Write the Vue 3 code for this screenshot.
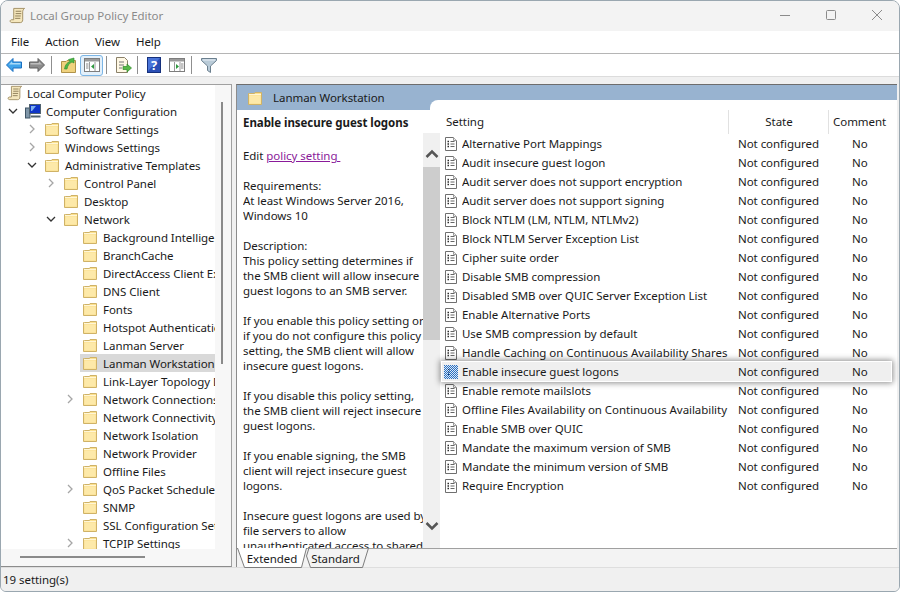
<template>
  <div class="window">
    <svg class="defs" width="0" height="0">
      <symbol id="folder" viewBox="0 0 16 16">
        <path d="M1.500 3.500 V14.500 H14.500 V2.500 H8 L7.500 3.500 H2.500 Z" fill="#fbe08f" stroke="#cfb267" />
        <path d="M2.500 5.500 H13.500 V13.500 H2.500 Z" fill="#fde9a9" />
        <path d="M2 4.500 H14" stroke="#fff6d6" />
      </symbol>
      <symbol id="doc" viewBox="0 0 16 16">
        <path d="M2.500 1.500 H10.500 L13.500 4.500 V14.500 H2.500 Z" fill="#fff" stroke="#6f6f6f" />
        <path d="M10.500 1.500 V4.500 H13.500" fill="#eee" stroke="#9a9a9a" />
        <path d="M4.500 5.500 H6 M4.500 8 H6 M4.500 10.500 H6" stroke="#2a2a2a" stroke-width="1.300" />
        <path d="M7.500 5.500 H11.500 M7.500 8 H11.500 M7.500 10.500 H11.500" stroke="#666" />
      </symbol>
      <symbol id="scroll" viewBox="0 0 18 18">
        <path d="M5 1.500 H16.500 C15 2.500 14.500 4 14.500 5 V13.500 C14.500 15.500 13.500 16.500 12 16.500 H3 C1 16.500 0.500 14 2.500 13.500 H5 Z" fill="#f5e7bd" stroke="#a08e63" />
        <path d="M7 4.500 H13 M7 7 H13 M6.500 9.500 H12.500 M6.500 12 H12" stroke="#8a7a55" />
      </symbol>
      <symbol id="computer" viewBox="0 0 16 16">
        <rect x="0.500" y="5" width="4.500" height="10" fill="#7f96a8" stroke="#3f5566" />
        <rect x="4.500" y="1.500" width="11" height="9" fill="#0f35c8" stroke="#50626f" />
        <path d="M6 3 H11 L7 8 H6 Z" fill="#7fb2ef" />
        <path d="M6 13.500 H15.500" stroke="#50626f" stroke-width="2" />
      </symbol>
      <pattern id="dither" width="2" height="2" patternUnits="userSpaceOnUse">
        <rect width="2" height="2" fill="#dbe8f6" />
        <rect width="1" height="1" fill="#2a6fc0" />
        <rect x="1" y="1" width="1" height="1" fill="#2a6fc0" />
      </pattern>
    </svg>

    <div class="titlebar">
      <svg class="app-icon" width="17" height="17"><use href="#scroll" /></svg>
      <span class="title">Local Group Policy Editor</span>
      <div class="controls">
        <svg width="10" height="10" viewBox="0 0 10 10"><path d="M0 5.500 H10" stroke="#8b8b8b" /></svg>
        <svg width="10" height="10" viewBox="0 0 10 10"><rect x="0.500" y="0.500" width="9" height="9" rx="1" fill="none" stroke="#8b8b8b" /></svg>
        <svg width="10" height="10" viewBox="0 0 10 10"><path d="M0 0 L10 10 M10 0 L0 10" stroke="#8b8b8b" /></svg>
      </div>
    </div>

    <div class="menubar">
      <span v-for="m in menus" :key="m">{{ m }}</span>
    </div>

    <div class="toolbar">
      <svg class="tool m7" width="16" height="14" viewBox="0 0 16 14"><path d="M0.500 7 L7 0.500 V4 H15.500 V10 H7 V13.500 Z" fill="#3fa4ea" stroke="#1a6fc0" /><path d="M2.500 7 L6 3.500 V5 H14.500 V6.500 H3 Z" fill="#a9daf8" /></svg>
      <svg class="tool m6" width="16" height="14" viewBox="0 0 16 14"><path d="M15.500 7 L9 0.500 V4 H0.500 V10 H9 V13.500 Z" fill="#8c8c8c" stroke="#5f5f5f" /><path d="M13.500 7 L10 3.500 V5 H1.500 V6.500 H13 Z" fill="#bdbdbd" /></svg>
      <i class="sep"></i>
      <svg class="tool" width="15" height="16" viewBox="0 0 15 16"><path d="M0.500 4.500 H5 L6 3.500 H14.500 V15.500 H0.500 Z" fill="#f0d27e" stroke="#b0934a" /><path d="M3.500 12 C4 8 6 5.500 9 4.500 L7.500 2.500 L13 1 L13 6 L11 5 C8.500 6 6.500 8.500 6 12 Z" fill="#4fb848" stroke="#2a8a2a" stroke-width="0.600" /></svg>
      <span class="tool-active">
        <svg width="16" height="14" viewBox="0 0 16 14"><rect x="0.500" y="0.500" width="15" height="13" fill="#fff" stroke="#7d7d7d" /><path d="M1 1 H15 V3.500 H1 Z" fill="#9a9a9a" /><path d="M5.500 4 V13 M11 4 V13" stroke="#9a9a9a" /><path d="M2 6 H4.500 M2 8 H4.500 M2 10 H4.500" stroke="#888" /><path d="M10 6 V11 L7 8.500 Z" fill="#2f9a3f" /></svg>
      </span>
      <i class="sep"></i>
      <svg class="tool pull m5" width="17" height="16" viewBox="0 0 17 16"><path d="M1.500 0.500 H9.500 L12.500 3.500 V15.500 H1.500 Z" fill="#fff8e4" stroke="#8a8069" /><path d="M4 5 H9 M4 8 H9 M4 11 H7" stroke="#777" /><path d="M8 9.500 H12 V7 L16.500 11 L12 15 V12.500 H8 Z" fill="#58b947" stroke="#2f8a2a" stroke-width="0.700" /></svg>
      <i class="sep"></i>
      <svg class="tool m8" width="14" height="16" viewBox="0 0 14 16"><rect x="0.500" y="0.500" width="13" height="15" fill="#2b4fb5" stroke="#15307c" /><path d="M1 1 H13 L1 14 Z" fill="#4a74d8" /><text x="7" y="13" text-anchor="middle" class="help-glyph">?</text></svg>
      <svg class="tool m6" width="16" height="14" viewBox="0 0 16 14"><rect x="0.500" y="0.500" width="15" height="13" fill="#fff" stroke="#7d7d7d" /><path d="M1 1 H15 V3.500 H1 Z" fill="#9a9a9a" /><path d="M5.500 4 V13 M11 4 V13" stroke="#9a9a9a" /><path d="M12 6 H14.500 M12 8 H14.500 M12 10 H14.500" stroke="#888" /><path d="M7 6 V11 L10 8.500 Z" fill="#2f9a3f" /></svg>
      <i class="sep"></i>
      <svg class="tool" width="16" height="15" viewBox="0 0 16 15"><path d="M0.500 0.500 H15.500 V2.500 L9.500 8 V14.500 L6.500 12.500 V8 L0.500 2.500 Z" fill="#b9cbd8" stroke="#6b7f8e" /><path d="M2 1.500 H14 V2.500 H2 Z" fill="#e9f0f5" /></svg>
    </div>

    <div class="panes">
      <div class="tree-pane">
        <div class="tree">
          <div class="tree-inner">
            <div
              v-for="node in tree"
              :key="node.label"
              class="tree-row"
              :class="{ selected: node.selected, root: node.level === 0 }"
              :style="{ paddingLeft: Math.max(node.level * 19 - 13, 5) + 'px' }"
            >
              <svg class="chev" width="10" height="10" viewBox="0 0 10 10">
                <path v-if="node.arrow === 'open'" d="M1 3 L5 7 L9 3" fill="none" stroke="#333" stroke-width="1.300" />
                <path v-if="node.arrow === 'closed'" d="M3 1 L7 5 L3 9" fill="none" stroke="#a6a6a6" stroke-width="1.300" />
              </svg>
              <svg class="node-icon" width="16" height="16"><use :href="'#' + (node.icon || 'folder')" /></svg>
              <span class="node-label">{{ node.label }}</span>
            </div>
          </div>
        </div>
        <div class="tree-vscroll"><i></i></div>
        <div class="tree-hscroll"><i></i></div>
      </div>

      <div class="detail-pane">
        <div class="detail-head">
          <svg width="16" height="16"><use href="#folder" /></svg>
          <span>Lanman Workstation</span>
        </div>
        <div class="detail-body">
          <div class="desc">
            <div class="desc-text">
              <div class="desc-title">Enable insecure guest logons</div>
              <div class="desc-edit">Edit <a href="#" @click.prevent>policy setting&nbsp;</a></div>
              <div v-for="(line, i) in descLines" :key="i" class="desc-line">{{ line }}</div>
            </div>
            <div class="desc-scroll">
              <svg width="14" height="10" viewBox="0 0 14 10"><path d="M1.500 8 L7 2.500 L12.500 8" fill="none" stroke="#555" stroke-width="2.500" /></svg>
              <i></i>
              <svg width="14" height="10" viewBox="0 0 14 10"><path d="M1.500 2 L7 7.500 L12.500 2" fill="none" stroke="#555" stroke-width="2.500" /></svg>
            </div>
          </div>
          <div class="list">
            <div class="list-head">
              <span class="col-setting">Setting</span>
              <span class="col-state">State</span>
              <span class="col-comment">Comment</span>
            </div>
            <div
              v-for="s in settings"
              :key="s"
              class="list-row"
              :class="{ active: s === activeSetting }"
            >
              <svg v-if="s === activeSetting" class="row-icon" width="16" height="16" viewBox="0 0 16 16"><rect x="1" y="1" width="14" height="14" fill="url(#dither)" /><path d="M5 5.500 H6.500 M5 8 H6.500 M5 10.500 H6.500" stroke="#123a70" /></svg>
              <svg v-else class="row-icon" width="16" height="16"><use href="#doc" /></svg>
              <span class="cell-name">{{ s }}</span>
              <span class="cell-state">Not configured</span>
              <span class="cell-comment">No</span>
            </div>
          </div>
        </div>
        <div class="tabs">
          <div class="tab tab-ext">
            <svg width="70" height="20" viewBox="0 0 70 20"><path d="M0.500 0 L7.500 19.500 H64.500 L69.500 0" fill="#fff" stroke="#7c7c7c" /></svg>
            <span>Extended</span>
          </div>
          <div class="tab tab-std">
            <svg width="64" height="20" viewBox="0 0 64 20"><path d="M0.500 8 L4.500 19.500 H56.500 L62.500 0 M0.500 8 L3 0" fill="none" stroke="#7c7c7c" /></svg>
            <span>Standard</span>
          </div>
        </div>
      </div>
    </div>

    <div class="statusbar">19 setting(s)</div>
  </div>
</template>

<script setup>
const menus = ["File", "Action", "View", "Help"];

const tree = [
  { label: "Local Computer Policy", level: 0, icon: "scroll" },
  { label: "Computer Configuration", level: 1, arrow: "open", icon: "computer" },
  { label: "Software Settings", level: 2, arrow: "closed" },
  { label: "Windows Settings", level: 2, arrow: "closed" },
  { label: "Administrative Templates", level: 2, arrow: "open" },
  { label: "Control Panel", level: 3, arrow: "closed" },
  { label: "Desktop", level: 3 },
  { label: "Network", level: 3, arrow: "open" },
  { label: "Background Intelligent Transfer", level: 4 },
  { label: "BranchCache", level: 4 },
  { label: "DirectAccess Client Experience", level: 4 },
  { label: "DNS Client", level: 4 },
  { label: "Fonts", level: 4 },
  { label: "Hotspot Authentication", level: 4 },
  { label: "Lanman Server", level: 4 },
  { label: "Lanman Workstation", level: 4, selected: true },
  { label: "Link-Layer Topology Discovery", level: 4 },
  { label: "Network Connections", level: 4, arrow: "closed" },
  { label: "Network Connectivity Status", level: 4 },
  { label: "Network Isolation", level: 4 },
  { label: "Network Provider", level: 4 },
  { label: "Offline Files", level: 4 },
  { label: "QoS Packet Scheduler", level: 4, arrow: "closed" },
  { label: "SNMP", level: 4 },
  { label: "SSL Configuration Settings", level: 4 },
  { label: "TCPIP Settings", level: 4, arrow: "closed" },
];

const descLines = [
  "Requirements:",
  "At least Windows Server 2016,",
  "Windows 10",
  "",
  "Description:",
  "This policy setting determines if",
  "the SMB client will allow insecure",
  "guest logons to an SMB server.",
  "",
  "If you enable this policy setting or",
  "if you do not configure this policy",
  "setting, the SMB client will allow",
  "insecure guest logons.",
  "",
  "If you disable this policy setting,",
  "the SMB client will reject insecure",
  "guest logons.",
  "",
  "If you enable signing, the SMB",
  "client will reject insecure guest",
  "logons.",
  "",
  "Insecure guest logons are used by",
  "file servers to allow",
  "unauthenticated access to shared",
];

const activeSetting = "Enable insecure guest logons";

const settings = [
  "Alternative Port Mappings",
  "Audit insecure guest logon",
  "Audit server does not support encryption",
  "Audit server does not support signing",
  "Block NTLM (LM, NTLM, NTLMv2)",
  "Block NTLM Server Exception List",
  "Cipher suite order",
  "Disable SMB compression",
  "Disabled SMB over QUIC Server Exception List",
  "Enable Alternative Ports",
  "Use SMB compression by default",
  "Handle Caching on Continuous Availability Shares",
  "Enable insecure guest logons",
  "Enable remote mailslots",
  "Offline Files Availability on Continuous Availability",
  "Enable SMB over QUIC",
  "Mandate the maximum version of SMB",
  "Mandate the minimum version of SMB",
  "Require Encryption",
];
</script>

<style>
html,
body {
  margin: 0;
  background: #fff;
}
</style>

<style scoped>
.window {
  width: 900px;
  height: 592px;
  box-sizing: border-box;
  border: 1px solid #9aa7b0;
  border-radius: 8px 8px 6px 6px;
  overflow: hidden;
  display: flex;
  flex-direction: column;
  background: #f0f0f0;
  font-family: "Noto Sans", sans-serif;
  font-size: 11.5px;
  letter-spacing: -0.05px;
  color: #1a1a1a;
}

.defs {
  position: absolute;
}

.titlebar {
  height: 30px;
  flex: none;
  box-sizing: border-box;
  display: flex;
  align-items: center;
  padding: 0 0 2px 8px;
  background: #f3f3f3;
}

.title {
  margin-left: 4px;
  color: #8a8a8a;
}

.controls {
  margin-left: auto;
  display: flex;
  gap: 36px;
  padding-right: 17px;
}

.menubar {
  height: 22px;
  flex: none;
  box-sizing: content-box;
  display: flex;
  align-items: center;
  gap: 16px;
  padding-left: 10px;
  background: #fff;
  border-bottom: 1px solid #b5b5b5;
}

.menubar span {
  margin-top: -2px;
}

.toolbar {
  height: 22px;
  flex: none;
  display: flex;
  align-items: center;
  padding-left: 5px;
  background: #fff;
  border-bottom: 1px solid #dcdcdc;
}

.m5 {
  margin-right: 5px;
}

.m6 {
  margin-right: 6px;
}

.m7 {
  margin-right: 7px;
}

.m8 {
  margin-right: 8px;
}

.pull {
  margin-left: -1px;
}

.tool-active {
  box-sizing: border-box;
  width: 23px;
  height: 21px;
  display: flex;
  align-items: center;
  justify-content: center;
  margin: 0 3px 0 4px;
  background: #e3f0fb;
  border: 1px solid #7cb6e6;
  border-radius: 3px;
}

.sep {
  width: 1px;
  height: 18px;
  background: #8f8f8f;
  margin-right: 9px;
}

.help-glyph {
  font-size: 13px;
  font-weight: 700;
  fill: #fff;
}

.panes {
  flex: 1;
  min-height: 0;
  display: flex;
  gap: 4px;
  padding-top: 7px;
  background: #f0f0f0;
  border-bottom: 1px solid #dedede;
}

.tree-pane {
  position: relative;
  width: 231px;
  flex: none;
  box-sizing: border-box;
  border: 1px solid #a0a0a0;
  border-left: 0;
  border-bottom-color: #8c8c8c;
  background: #fff;
  padding-left: 1px;
}

.tree {
  width: 213px;
  height: 465px;
  overflow: hidden;
  background: #fff;
  box-sizing: border-box;
}

.tree-inner {
  margin-top: -1px;
}

.tree-row {
  height: 18px;
  display: flex;
  align-items: center;
  white-space: nowrap;
}

.tree-row.root .chev {
  display: none;
}

.tree-row.root .node-label {
  margin-left: 4px;
}

.tree-row.selected {
  background: #d9d9d9;
  margin-left: 78px;
  padding-left: 2px !important;
}

.tree-row.selected .chev {
  display: none;
}

.chev {
  flex: none;
  margin-right: 7px;
  width: 10px;
}

.node-icon {
  flex: none;
}

.node-label {
  margin-left: 5px;
}

.tree-vscroll {
  position: absolute;
  top: 0;
  right: 0;
  bottom: 0;
  width: 16px;
  background: #f7f7f7;
}

.tree-vscroll i {
  position: absolute;
  left: 6px;
  top: 17px;
  width: 2px;
  height: 262px;
  background: #8a8a8a;
}

.tree-hscroll {
  position: absolute;
  left: 0;
  right: 0;
  bottom: 0;
  height: 17px;
  background: #f7f7f7;
}

.tree-hscroll i {
  position: absolute;
  left: 19px;
  top: 7px;
  width: 125px;
  height: 2px;
  background: #8a8a8a;
}

.detail-pane {
  flex: 1;
  min-width: 0;
  display: flex;
  flex-direction: column;
  box-sizing: border-box;
  border-top: 1px solid #6d6d6d;
  border-left: 1px solid #8c8c8c;
  margin-right: 2px;
  background: #fff;
}

.detail-head {
  height: 25px;
  flex: none;
  box-sizing: border-box;
  display: flex;
  align-items: center;
  gap: 10px;
  padding: 0 0 0 10px;
  background: #98b3d0;
}

.detail-body {
  flex: 1;
  min-height: 0;
  display: flex;
  background: #fff;
}

.desc {
  width: 203px;
  flex: none;
  display: flex;
  padding-left: 6px;
  box-sizing: border-box;
  overflow: hidden;
}

.desc-text {
  flex: 1;
  min-width: 0;
  white-space: nowrap;
  overflow: hidden;
  line-height: 15px;
  padding-top: 5px;
}

.desc-title {
  font-weight: 700;
  margin-bottom: 18px;
}

.desc-edit {
  margin-bottom: 15px;
}

.desc-edit a {
  color: #8a1a9a;
}

.desc-line {
  height: 15px;
}

.desc-scroll {
  position: relative;
  width: 17px;
  flex: none;
  margin-top: 23px;
  display: flex;
  flex-direction: column;
  align-items: center;
  justify-content: space-between;
  padding: 16px 0 17px;
  box-sizing: border-box;
  background: #f0f0f0;
}

.desc-scroll i {
  position: absolute;
  left: 0;
  top: 34px;
  width: 100%;
  height: 173px;
  background: #cdcdcd;
}

.list {
  flex: 1;
  min-width: 0;
  margin-top: -10px;
  background: #fff;
  position: relative;
}

/* the white tab corner that cuts into the blue header */
.list::before {
  content: "";
  position: absolute;
  left: -10px;
  top: 0;
  width: 20px;
  height: 10px;
  background: #fff;
  border-top-left-radius: 8px;
}

.list-head {
  height: 25px;
  margin-top: 9px;
  display: flex;
  align-items: center;
  position: relative;
}

.col-setting {
  margin-left: 6px;
  width: 282px;
  flex: none;
  height: 24px;
  line-height: 24px;
  border-right: 1px solid #e1e1e1;
}

.col-state {
  width: 98px;
  padding-left: 1px;
  flex: none;
  text-align: center;
  height: 24px;
  line-height: 24px;
  border-right: 1px solid #e1e1e1;
}

.col-comment {
  flex: 1;
  padding-left: 4px;
  height: 24px;
  line-height: 24px;
}

.list-row {
  height: 19px;
  display: flex;
  align-items: center;
  white-space: nowrap;
  padding-left: 3px;
  box-sizing: border-box;
  position: relative;
}

.list-row.active {
  margin: 0 6px 0 2px;
  padding-left: 1px;
  background: #efefef;
  outline: 1px solid #fff;
  box-shadow: 0 0 6px 2px rgba(0, 0, 0, 0.45);
  z-index: 1;
}

.row-icon {
  flex: none;
}

.cell-name {
  margin-left: 3px;
  width: 276px;
  flex: none;
  overflow: hidden;
}

.cell-state {
  width: 114px;
  flex: none;
}

.cell-comment {
  flex: none;
}

.tabs {
  height: 18px;
  flex: none;
  display: flex;
  border-top: 1px solid #a0a0a0;
  background: #f3f3f3;
}

.tab {
  position: relative;
  height: 20px;
  line-height: 20px;
  text-align: center;
}

.tab-ext {
  width: 69px;
  padding-left: 1px;
  box-sizing: border-box;
}

.tab-std {
  width: 64px;
  padding-right: 5px;
  box-sizing: border-box;
}

.tab svg {
  position: absolute;
  left: 0;
  top: -1px;
}

.tab span {
  position: relative;
}

.statusbar {
  height: 23px;
  flex: none;
  line-height: 24px;
  padding-left: 2px;
  background: #f0f0f0;
}
</style>
